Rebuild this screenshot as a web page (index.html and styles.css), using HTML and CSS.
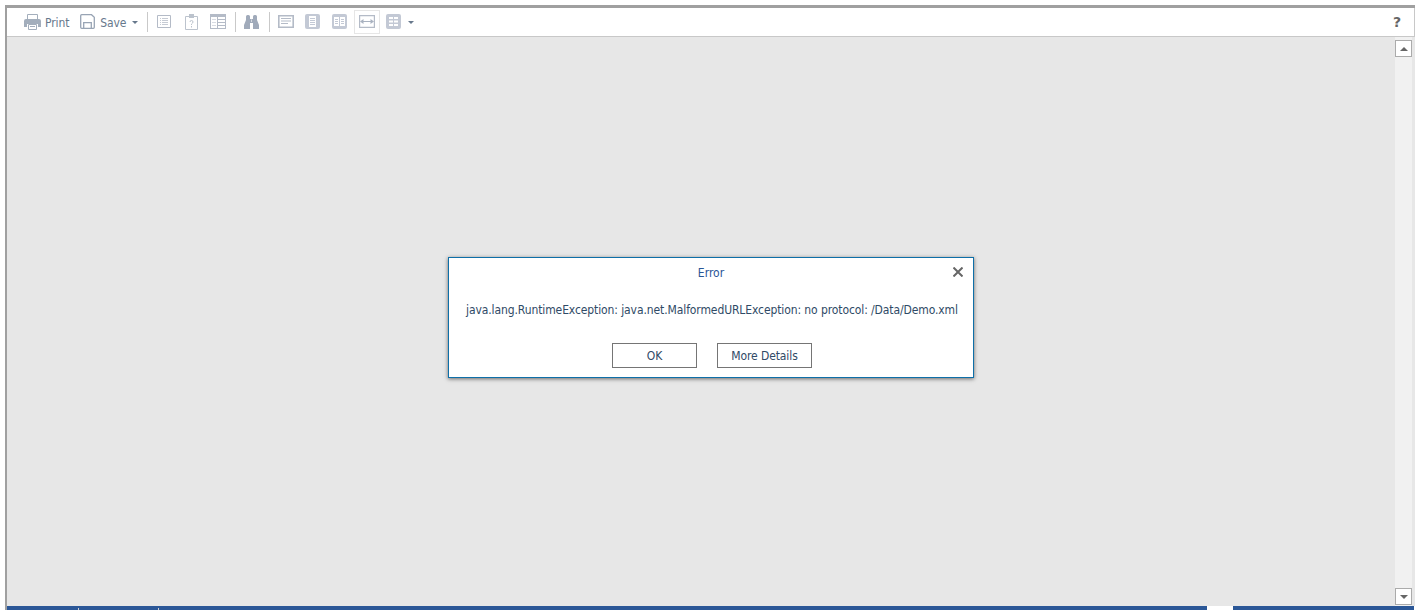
FILE: index.html
```html
<!DOCTYPE html>
<html lang="en">
<head>
<meta charset="utf-8">
<title>Error</title>
<link rel="stylesheet" href="styles.css">
</head>
<body>
<div class="frame">
  <header class="toolbar">
    <button class="tool print">
      <svg class="ic" width="17" height="16" viewBox="0 0 17 16"><path fill="none" stroke="#a3aebc" d="M3.500.500h10v5h-10z"/><path fill="#a3aebc" d="M0 7q0-2 2-2h13q2 0 2 2v6h-3v-3H3v3H0z"/><path fill="#fff" stroke="#a3aebc" d="M4.500 10.500h8v5h-8z"/><path stroke="#a3aebc" d="M6 12.500h5"/></svg>
      <span>Print</span>
    </button>
    <button class="tool save">
      <svg class="ic" width="15" height="15" viewBox="0 0 15 15"><path fill="none" stroke="#98a4b4" stroke-width="1.300" d="M1.700.700h9.800l2.800 2.500v10.100q0 1-1 1H1.700q-1 0-1-1V1.700q0-1 1-1z"/><path fill="none" stroke="#98a4b4" stroke-width="1.300" d="M3.700 14V8.700h7.600V14"/></svg>
      <span>Save</span>
      <i class="caret"></i>
    </button>
    <i class="sep"></i>
    <div class="group">
      <svg class="g-list" width="14" height="13" viewBox="0 0 14 13"><path fill="#fff" stroke="#b4bbc7" d="M.500.500h13v12H.500z"/><path stroke="#c6cbd4" d="M3 3.500h1M5 3.500h6M3 5.500h1M5 5.500h6M3 7.500h1M5 7.500h6M3 9.500h1M5 9.500h6"/></svg>
      <svg class="g-help" width="13" height="16" viewBox="0 0 13 16"><path fill="none" stroke="#bcc3cd" d="M.500 2.500h12v13H.500z"/><path fill="#bcc3cd" d="M4 0h5v4H4z"/><path fill="none" stroke="#bcc3cd" d="M5 8q0-1.500 1.500-1.500T8 8q0 1-1.500 2v1M6.500 12v1.500"/></svg>
      <svg class="g-table" width="16" height="15" viewBox="0 0 16 15"><path fill="#b4bbc7" d="M0 0h16v15H0z"/><path fill="#fff" d="M1 3h6v11H1zM8 3h7v2H8zM8 6h7v2H8zM8 9h7v2H8zM8 12h7v2H8z"/><path stroke="#d8dbe2" d="M2 5.500h4M2 8.500h4M2 11.500h4"/></svg>
    </div>
    <i class="sep"></i>
    <svg class="bino" width="15" height="14" viewBox="0 0 15 14"><path fill="#a0aaba" d="M2 1.500q0-1.500 1.500-1.500h1Q6 0 6 1.500V4h3V1.500Q9 0 10.500 0h1Q13 0 13 1.500V5l2 5v4H9V8H6v6H0v-4l2-5z"/><path fill="#fff" d="M7 4.500h1V7H7z" opacity=".6"/></svg>
    <i class="sep"></i>
    <div class="group views">
      <svg class="v-single" width="16" height="13" viewBox="0 0 16 13"><path fill="#fff" stroke="#b4bbc7" stroke-width="1.600" d="M.800.800h14.400v11.400H.800z"/><path fill="#b4bbc7" d="M3 3h10v1H3zM3 5.500h10v1H3zM3 8h7v1H3z"/></svg>
      <svg class="v-page" width="15" height="15" viewBox="0 0 15 15"><rect width="15" height="15" rx="2" fill="#c3c9d5"/><path fill="#fff" d="M4 2h7v11H4z"/><path stroke="#c3c9d5" d="M5 4.500h5M5 6.500h5M5 8.500h5M5 10.500h5"/></svg>
      <svg class="v-book" width="15" height="15" viewBox="0 0 15 15"><rect width="15" height="15" rx="2" fill="#c3c9d5"/><path fill="#fff" d="M2 3h5v9H2zM8 3h5v9H8z"/><path stroke="#c3c9d5" d="M3 5.500h3M3 7.500h3M3 9.500h3M9 5.500h3M9 7.500h3M9 9.500h3"/></svg>
      <span class="active">
        <svg width="16" height="13" viewBox="0 0 16 13"><path fill="#fff" stroke="#b4bbc7" stroke-width="1.200" d="M.600.600h14.800v11.800H.600z"/><path fill="#a9b2c0" d="M1 6.500 4.500 4v2h7V4L15 6.500 11.500 9V7h-7v2z"/></svg>
      </span>
      <svg class="v-grid" width="15" height="15" viewBox="0 0 15 15"><rect width="15" height="15" rx="2" fill="#c3c9d5"/><path fill="#fff" d="M3 3h4v2H3zM8 3h4v2H8zM3 6.500h4v2H3zM8 6.500h4v2H8zM3 10h4v2H3zM8 10h4v2H8z"/></svg>
      <i class="caret"></i>
    </div>
    <b class="help">?</b>
  </header>
  <main class="viewer">
    <section class="dialog">
      <div class="dialog-title">
        <h1>Error</h1>
        <svg class="close" width="10" height="10" viewBox="0 0 10 10"><path stroke="#666" stroke-width="2" d="M.500.500l9 9M9.500.500l-9 9"/></svg>
      </div>
      <p class="message">java.lang.RuntimeException: java.net.MalformedURLException: no protocol: /Data/Demo.xml</p>
      <div class="actions">
        <button class="btn ok">OK</button>
        <button class="btn more">More Details</button>
      </div>
    </section>
    <aside class="scrollbar">
      <span class="arrow"><i class="up"></i></span>
      <span class="arrow"><i class="down"></i></span>
    </aside>
  </main>
  <footer class="tabs">
    <i class="tick t1"></i><i class="tick t2"></i><i class="tab"></i>
  </footer>
</div>
</body>
</html>
```
FILE: styles.css
```css
* { box-sizing: border-box; }
html, body { margin: 0; height: 100%; overflow: hidden; background: #fff; }
body { padding: 5px 3px 0 5px; font-family: "DejaVu Sans Condensed", "DejaVu Sans", sans-serif; font-stretch: condensed; color: #2f4a66; }
.frame { height: 605px; display: flex; flex-direction: column; border-top: 3px solid #a0a0a0; border-left: 2px solid #a0a0a0; }
.toolbar { height: 29px; flex: none; display: flex; align-items: center; padding: 0 0 1px 17px; background: #fff; border-bottom: 1px solid #c8c8c8; border-right: 1px solid #c8c8c8; }
button { font: inherit; background: none; border: 0; padding: 0; color: inherit; }
.tool { display: flex; align-items: center; font-size: 12px; color: #67788c; }
.tool span { padding-top: 3px; letter-spacing: -.1px; }
.print { gap: 4px; margin-right: 11px; }
.save { gap: 5px; margin-right: 9px; }
.caret { display: inline-block; border: 3px solid transparent; border-top: 3px solid #67788c; border-bottom: 0; margin-top: 1px; }
.save .caret { margin-left: 1px; }
.sep { width: 1px; height: 20px; background: #c9c9c9; }
.group { display: flex; align-items: center; margin: 0 9px; }
.g-help { margin-left: 14px; }
.g-table { margin-left: 12px; }
.bino { margin: 0 10px 0 8px; }
.views { margin: 0 0 0 8px; }
.v-page { margin-left: 11px; }
.v-book { margin-left: 12px; }
.active { width: 26px; height: 24px; margin: 0 6px 0 7px; display: flex; align-items: center; justify-content: center; border: 1px solid #e6e6e6; }
.views .caret { margin-left: 7px; }
.help { margin-left: auto; margin-right: 13px; font: 700 14px "DejaVu Sans", sans-serif; color: #666; }
.viewer { flex: 1; min-height: 0; display: flex; justify-content: flex-end; background: #e7e7e7; position: relative; }
.scrollbar { width: 17px; margin-right: 3px; background: #f1f1f1; display: flex; flex-direction: column; justify-content: space-between; padding: 3px 0 1px; }
.arrow { width: 17px; height: 17px; background: #fff; border: 1px solid #ababab; display: flex; align-items: center; justify-content: center; }
.up, .down { border: 4px solid transparent; }
.up { border-bottom: 4px solid #666; border-top: 0; }
.down { border-top: 4px solid #666; border-bottom: 0; }
.dialog { position: absolute; left: 441px; top: 220px; width: 526px; height: 121px; background: #fff; border: 1px solid #0e6fa8; box-shadow: 0 1px 4px rgba(0,0,0,.55); display: flex; flex-direction: column; }
.dialog-title { height: 28px; flex: none; position: relative; display: flex; align-items: center; justify-content: center; padding-top: 2px; }
.dialog-title h1 { margin: 0; font-size: 12px; font-weight: 400; color: #2a5596; }
.close { position: absolute; right: 10px; top: 9px; }
.message { margin: 16px 0 0 17px; font-size: 12px; line-height: 16px; white-space: nowrap; letter-spacing: -.1px; }
.actions { display: flex; gap: 20px; margin: 25px 0 0 163px; }
.btn { height: 25px; border: 1px solid #757575; background: #fff; font-size: 12px; color: #2f4a66; letter-spacing: -.1px; }
.ok { width: 85px; }
.more { width: 95px; }
.tabs { height: 4px; width: 1407px; flex: none; background: #2b5797; position: relative; display: flex; }
.tick { width: 1px; height: 2px; background: #ccc; position: absolute; bottom: 0; }
.t1 { left: 71px; }
.t2 { left: 151px; }
.tab { position: absolute; left: 1200px; top: 0; width: 26px; height: 4px; background: #fff; }
```
